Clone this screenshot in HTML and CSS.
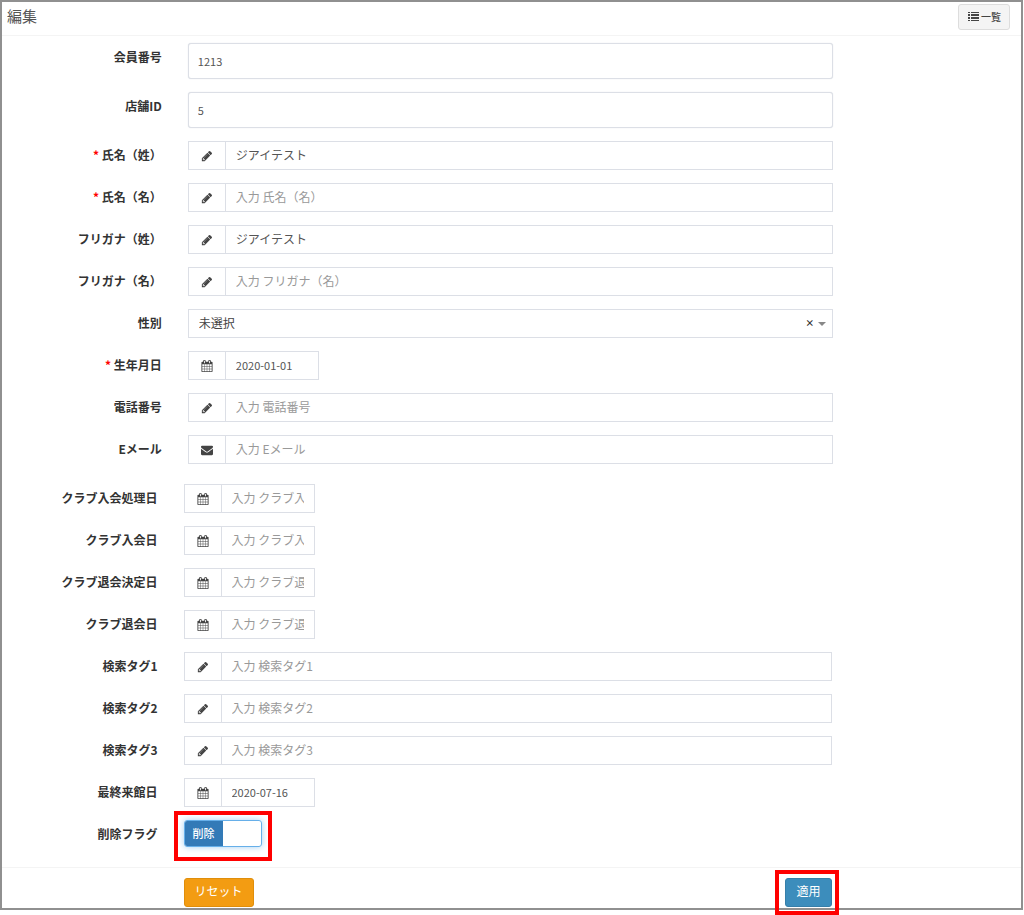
FILE: index.html
```html
<!DOCTYPE html>
<html lang="ja">
<head>
    <meta charset="UTF-8">
    <meta name="viewport" content="width=device-width, initial-scale=1.0">
    <title>編集</title>
    <link rel="stylesheet" href="styles.css">
</head>
<body>
    <!-- icon set -->
    <svg class="sprite" aria-hidden="true">
        <symbol id="pencil" viewBox="0 0 1792 1792"><path d="M491 1536l91-91-235-235-91 91v107h128v128h107zm523-928q0-22-22-22-10 0-17 7l-542 542q-7 7-7 17 0 12 12 12 6 0 12-7l552-542q12-4 12-7zm-54-192l416 416-832 832h-416v-416zm683 96q0 53-37 90l-166 166-416-416 166-165q36-38 90-38 53 0 91 38l235 234q37 39 37 91z"/></symbol>
        <symbol id="calendar" viewBox="0 0 1792 1792"><path d="M192 1664h288v-288h-288v288zm352 0h320v-288h-320v288zm-352-352h288v-320h-288v320zm352 0h320v-320h-320v320zm-352-384h288v-288h-288v288zm736 736h320v-288h-320v288zm-384-736h320v-288h-320v288zm768 736h288v-288h-288v288zm-384-352h320v-320h-320v320zm-352-864v-288q0-13-9.500-22.500t-22.500-9.500h-64q-13 0-22.500 9.500t-9.500 22.500v288q0 13 9.500 22.500t22.500 9.500h64q13 0 22.500-9.500t9.500-22.500zm736 864h288v-320h-288v320zm-384-384h320v-288h-320v288zm384 0h288v-288h-288v288zm32-480v-288q0-13-9.500-22.500t-22.500-9.500h-64q-13 0-22.500 9.500t-9.500 22.500v288q0 13 9.500 22.500t22.500 9.500h64q13 0 22.500-9.500t9.500-22.500zm384-64v1280q0 52-38 90t-90 38h-1408q-52 0-90-38t-38-90v-1280q0-52 38-90t90-38h128v-96q0-66 47-113t113-47h64q66 0 113 47t47 113v96h384v-96q0-66 47-113t113-47h64q66 0 113 47t47 113v96h128q52 0 90 38t38 90z"/></symbol>
        <symbol id="envelope" viewBox="0 0 1792 1792"><path d="M1792 710v794q0 66-47 113t-113 47h-1472q-66 0-113-47t-47-113v-794q44 49 101 87 362 246 497 345 57 42 92.500 65.500t94.500 48 110 24.500h2q51 0 110-24.500t94.500-48 92.500-65.500q170-123 498-345 57-39 100-87zm0-294q0 79-49 151t-122 123q-376 261-468 325-10 7-42.500 31t-54 38.500-52 32.500-57.500 27-50 9h-2q-23 0-50-9t-57.500-27-52-32.500-54-38.500-42.500-31q-91-64-262-182.500t-205-142.500q-62-42-117-115.500t-55-136.500q0-78 41.500-130t118.500-52h1472q65 0 112.500 47t47.500 113z"/></symbol>
        <symbol id="list" viewBox="0 0 11 11"><path d="M0 1h2v1H0zM3 1h8v1H3zM0 3h2v2H0zM3 3h8v2H3zM0 6h2v2H0zM3 6h8v2H3zM0 9h2v1H0zM3 9h8v1H3z"/></symbol>
    </svg>

    <form class="box">
        <div class="box-header">
            <h1>編集</h1>
            <a class="btn-list" href="#"><svg class="icon"><use href="#list"/></svg>一覧</a>
        </div>

        <div class="fields fields-main">
            <div class="form-group">
                <label for="member_no">会員番号</label>
                <div class="field"><input type="text" id="member_no" class="control plain number" value="1213"></div>
            </div>
            <div class="form-group">
                <label for="shop_id">店舗ID</label>
                <div class="field"><input type="text" id="shop_id" class="control plain number" value="5"></div>
            </div>
            <div class="form-group">
                <label for="last_name" class="required">氏名（姓）</label>
                <div class="field input-group">
                    <span class="addon"><svg class="icon"><use href="#pencil"/></svg></span>
                    <input type="text" id="last_name" class="control" value="ジアイテスト" placeholder="入力 氏名（姓）">
                </div>
            </div>
            <div class="form-group">
                <label for="first_name" class="required">氏名（名）</label>
                <div class="field input-group">
                    <span class="addon"><svg class="icon"><use href="#pencil"/></svg></span>
                    <input type="text" id="first_name" class="control" placeholder="入力 氏名（名）">
                </div>
            </div>
            <div class="form-group">
                <label for="last_kana">フリガナ（姓）</label>
                <div class="field input-group">
                    <span class="addon"><svg class="icon"><use href="#pencil"/></svg></span>
                    <input type="text" id="last_kana" class="control" value="ジアイテスト" placeholder="入力 フリガナ（姓）">
                </div>
            </div>
            <div class="form-group">
                <label for="first_kana">フリガナ（名）</label>
                <div class="field input-group">
                    <span class="addon"><svg class="icon"><use href="#pencil"/></svg></span>
                    <input type="text" id="first_kana" class="control" placeholder="入力 フリガナ（名）">
                </div>
            </div>
            <div class="form-group">
                <label for="gender">性別</label>
                <div class="field select-wrap">
                    <select id="gender" class="control">
                        <option>未選択</option>
                        <option>男性</option>
                        <option>女性</option>
                    </select>
                    <button type="button" class="clear" aria-label="クリア">×</button>
                    <span class="caret"></span>
                </div>
            </div>
            <div class="form-group">
                <label for="birthday" class="required">生年月日</label>
                <div class="field input-group date">
                    <span class="addon"><svg class="icon"><use href="#calendar"/></svg></span>
                    <input type="text" id="birthday" class="control number" value="2020-01-01">
                </div>
            </div>
            <div class="form-group">
                <label for="tel">電話番号</label>
                <div class="field input-group">
                    <span class="addon"><svg class="icon"><use href="#pencil"/></svg></span>
                    <input type="tel" id="tel" class="control" placeholder="入力 電話番号">
                </div>
            </div>
            <div class="form-group">
                <label for="email">Eメール</label>
                <div class="field input-group">
                    <span class="addon"><svg class="icon"><use href="#envelope"/></svg></span>
                    <input type="email" id="email" class="control" placeholder="入力 Eメール">
                </div>
            </div>
        </div>

        <div class="fields fields-club">
            <div class="form-group">
                <label for="join_process">クラブ入会処理日</label>
                <div class="field input-group date">
                    <span class="addon"><svg class="icon"><use href="#calendar"/></svg></span>
                    <input type="text" id="join_process" class="control" placeholder="入力 クラブ入会処理日">
                </div>
            </div>
            <div class="form-group">
                <label for="join_date">クラブ入会日</label>
                <div class="field input-group date">
                    <span class="addon"><svg class="icon"><use href="#calendar"/></svg></span>
                    <input type="text" id="join_date" class="control" placeholder="入力 クラブ入会日">
                </div>
            </div>
            <div class="form-group">
                <label for="leave_decision">クラブ退会決定日</label>
                <div class="field input-group date">
                    <span class="addon"><svg class="icon"><use href="#calendar"/></svg></span>
                    <input type="text" id="leave_decision" class="control" placeholder="入力 クラブ退会決定日">
                </div>
            </div>
            <div class="form-group">
                <label for="leave_date">クラブ退会日</label>
                <div class="field input-group date">
                    <span class="addon"><svg class="icon"><use href="#calendar"/></svg></span>
                    <input type="text" id="leave_date" class="control" placeholder="入力 クラブ退会日">
                </div>
            </div>
            <div class="form-group">
                <label for="tag1">検索タグ1</label>
                <div class="field input-group">
                    <span class="addon"><svg class="icon"><use href="#pencil"/></svg></span>
                    <input type="text" id="tag1" class="control" placeholder="入力 検索タグ1">
                </div>
            </div>
            <div class="form-group">
                <label for="tag2">検索タグ2</label>
                <div class="field input-group">
                    <span class="addon"><svg class="icon"><use href="#pencil"/></svg></span>
                    <input type="text" id="tag2" class="control" placeholder="入力 検索タグ2">
                </div>
            </div>
            <div class="form-group">
                <label for="tag3">検索タグ3</label>
                <div class="field input-group">
                    <span class="addon"><svg class="icon"><use href="#pencil"/></svg></span>
                    <input type="text" id="tag3" class="control" placeholder="入力 検索タグ3">
                </div>
            </div>
            <div class="form-group">
                <label for="last_visit">最終来館日</label>
                <div class="field input-group date">
                    <span class="addon"><svg class="icon"><use href="#calendar"/></svg></span>
                    <input type="text" id="last_visit" class="control number" value="2020-07-16">
                </div>
            </div>
            <div class="form-group">
                <label for="delete_flag">削除フラグ</label>
                <div class="field">
                    <span class="marked mark-switch">
                        <span class="switch">
                            <input type="checkbox" id="delete_flag" checked>
                            <span class="switch-on">削除</span>
                        </span>
                    </span>
                </div>
            </div>
        </div>

        <div class="box-footer">
            <div class="footer-buttons">
                <button type="reset" class="btn btn-warning">リセット</button>
                <span class="marked mark-submit"><button type="submit" class="btn btn-primary">適用</button></span>
            </div>
        </div>
    </form>
</body>
</html>
```
FILE: styles.css
```css
* {
    box-sizing: border-box;
}
body {
    margin: 0;
    min-height: 100vh;
    font-family: "Noto Sans CJK JP", sans-serif;
    font-size: 12px;
    color: #333;
    background: #fff;
}
input, select, button {
    font-family: inherit;
    font-size: 12px;
}
.sprite {
    display: none;
}
.icon {
    width: 12px;
    height: 12px;
    fill: #444;
}
.box {
    margin-right: 1px;
    border: 2px solid #909090;
}
.box-header {
    display: flex;
    justify-content: space-between;
    align-items: flex-start;
    height: 34px;
    padding: 2px 11px 0 5px;
    border-bottom: 1px solid #f4f4f4;
}
.box-header h1 {
    margin: 0;
    font-size: 15px;
    line-height: 24px;
    font-weight: normal;
    color: #555;
}
.btn-list {
    display: flex;
    align-items: center;
    gap: 2px;
    height: 26px;
    padding: 0 8px 2px 9px;
    border: 1px solid #ddd;
    border-radius: 3px;
    background: #f4f4f4;
    color: #444;
    font-size: 10px;
    font-weight: 500;
    text-decoration: none;
}
.btn-list .icon {
    width: 11px;
    height: 11px;
}
.fields {
    display: flex;
    flex-direction: column;
    gap: 13px;
}
.fields-main {
    padding: 7px 7px 0 5px;
}
.fields-club {
    padding: 20px 8px 20px 0;
}
.form-group {
    display: grid;
    grid-template-columns: 2fr 8fr 2fr;
}
.form-group label {
    padding-right: 13px;
    text-align: right;
    font-weight: bold;
    line-height: 27px;
    white-space: nowrap;
}
.required::before {
    content: "* ";
    color: #f00;
}
.field {
    margin: 0 13px;
    min-width: 0;
}
.control {
    display: block;
    width: 100%;
    height: 29px;
    padding: 0 10px 2px;
    border: 1px solid #dcdfe6;
    border-radius: 0;
    background: #fff;
    color: #555;
    outline: none;
}
.control::placeholder {
    color: #999;
    opacity: 1;
}
.plain {
    height: 36px;
    padding: 0 9px;
    border-radius: 3px;
    box-shadow: 0 0 1px #d2d6de;
}
.number {
    font-size: 11px;
}
.input-group {
    display: flex;
}
.addon {
    display: flex;
    flex: none;
    align-items: center;
    justify-content: center;
    width: 37px;
    border: 1px solid #dcdfe6;
    border-right: none;
}
.date {
    width: 131px;
}
.select-wrap {
    position: relative;
}
select.control {
    appearance: none;
    color: #444;
}
.clear {
    position: absolute;
    right: 19px;
    top: 7px;
    padding: 0;
    border: none;
    background: none;
    color: #333;
    font-size: 9px;
    line-height: 14px;
    font-weight: bold;
}
.caret {
    position: absolute;
    right: 7px;
    top: 13px;
    border: 4px solid transparent;
    border-top-color: #888;
    border-bottom: none;
}
/* red frames around the parts the manual refers to */
.marked {
    position: relative;
    display: inline-block;
    vertical-align: top;
}
.marked::after {
    content: "";
    position: absolute;
    border: 4px solid #f00;
    pointer-events: none;
}
.mark-switch::after {
    inset: -9px -10px -14px;
}
.mark-submit::after {
    inset: -8px -7px -8px -10px;
}
.switch {
    position: relative;
    display: block;
    width: 78px;
    height: 27px;
    border: 1px solid #66afe9;
    border-radius: 3px;
    overflow: hidden;
    box-shadow: 0 0 6px rgba(102, 175, 233, 0.6);
}
.switch input {
    position: absolute;
    inset: 0;
    width: 100%;
    height: 100%;
    margin: 0;
    opacity: 0;
    cursor: pointer;
}
.switch-on {
    display: block;
    width: 38px;
    background: #337ab7;
    color: #fff;
    font-size: 11px;
    font-weight: 500;
    line-height: 25px;
    text-align: center;
}
.box-footer {
    display: grid;
    grid-template-columns: 2fr 8fr 2fr;
    padding: 10px 8px 1px 0;
    border-top: 1px solid #f4f4f4;
}
.footer-buttons {
    grid-column: 2;
    display: flex;
    justify-content: space-between;
    margin: 0 13px;
}
.btn {
    display: block;
    height: 29px;
    padding: 0 10px 4px;
    border: 1px solid;
    border-radius: 3px;
    color: #fff;
    cursor: pointer;
}
.btn-warning {
    background: #f39c12;
    border-color: #e08e0b;
}
.btn-primary {
    background: #3c8dbc;
    border-color: #367fa9;
}
```
